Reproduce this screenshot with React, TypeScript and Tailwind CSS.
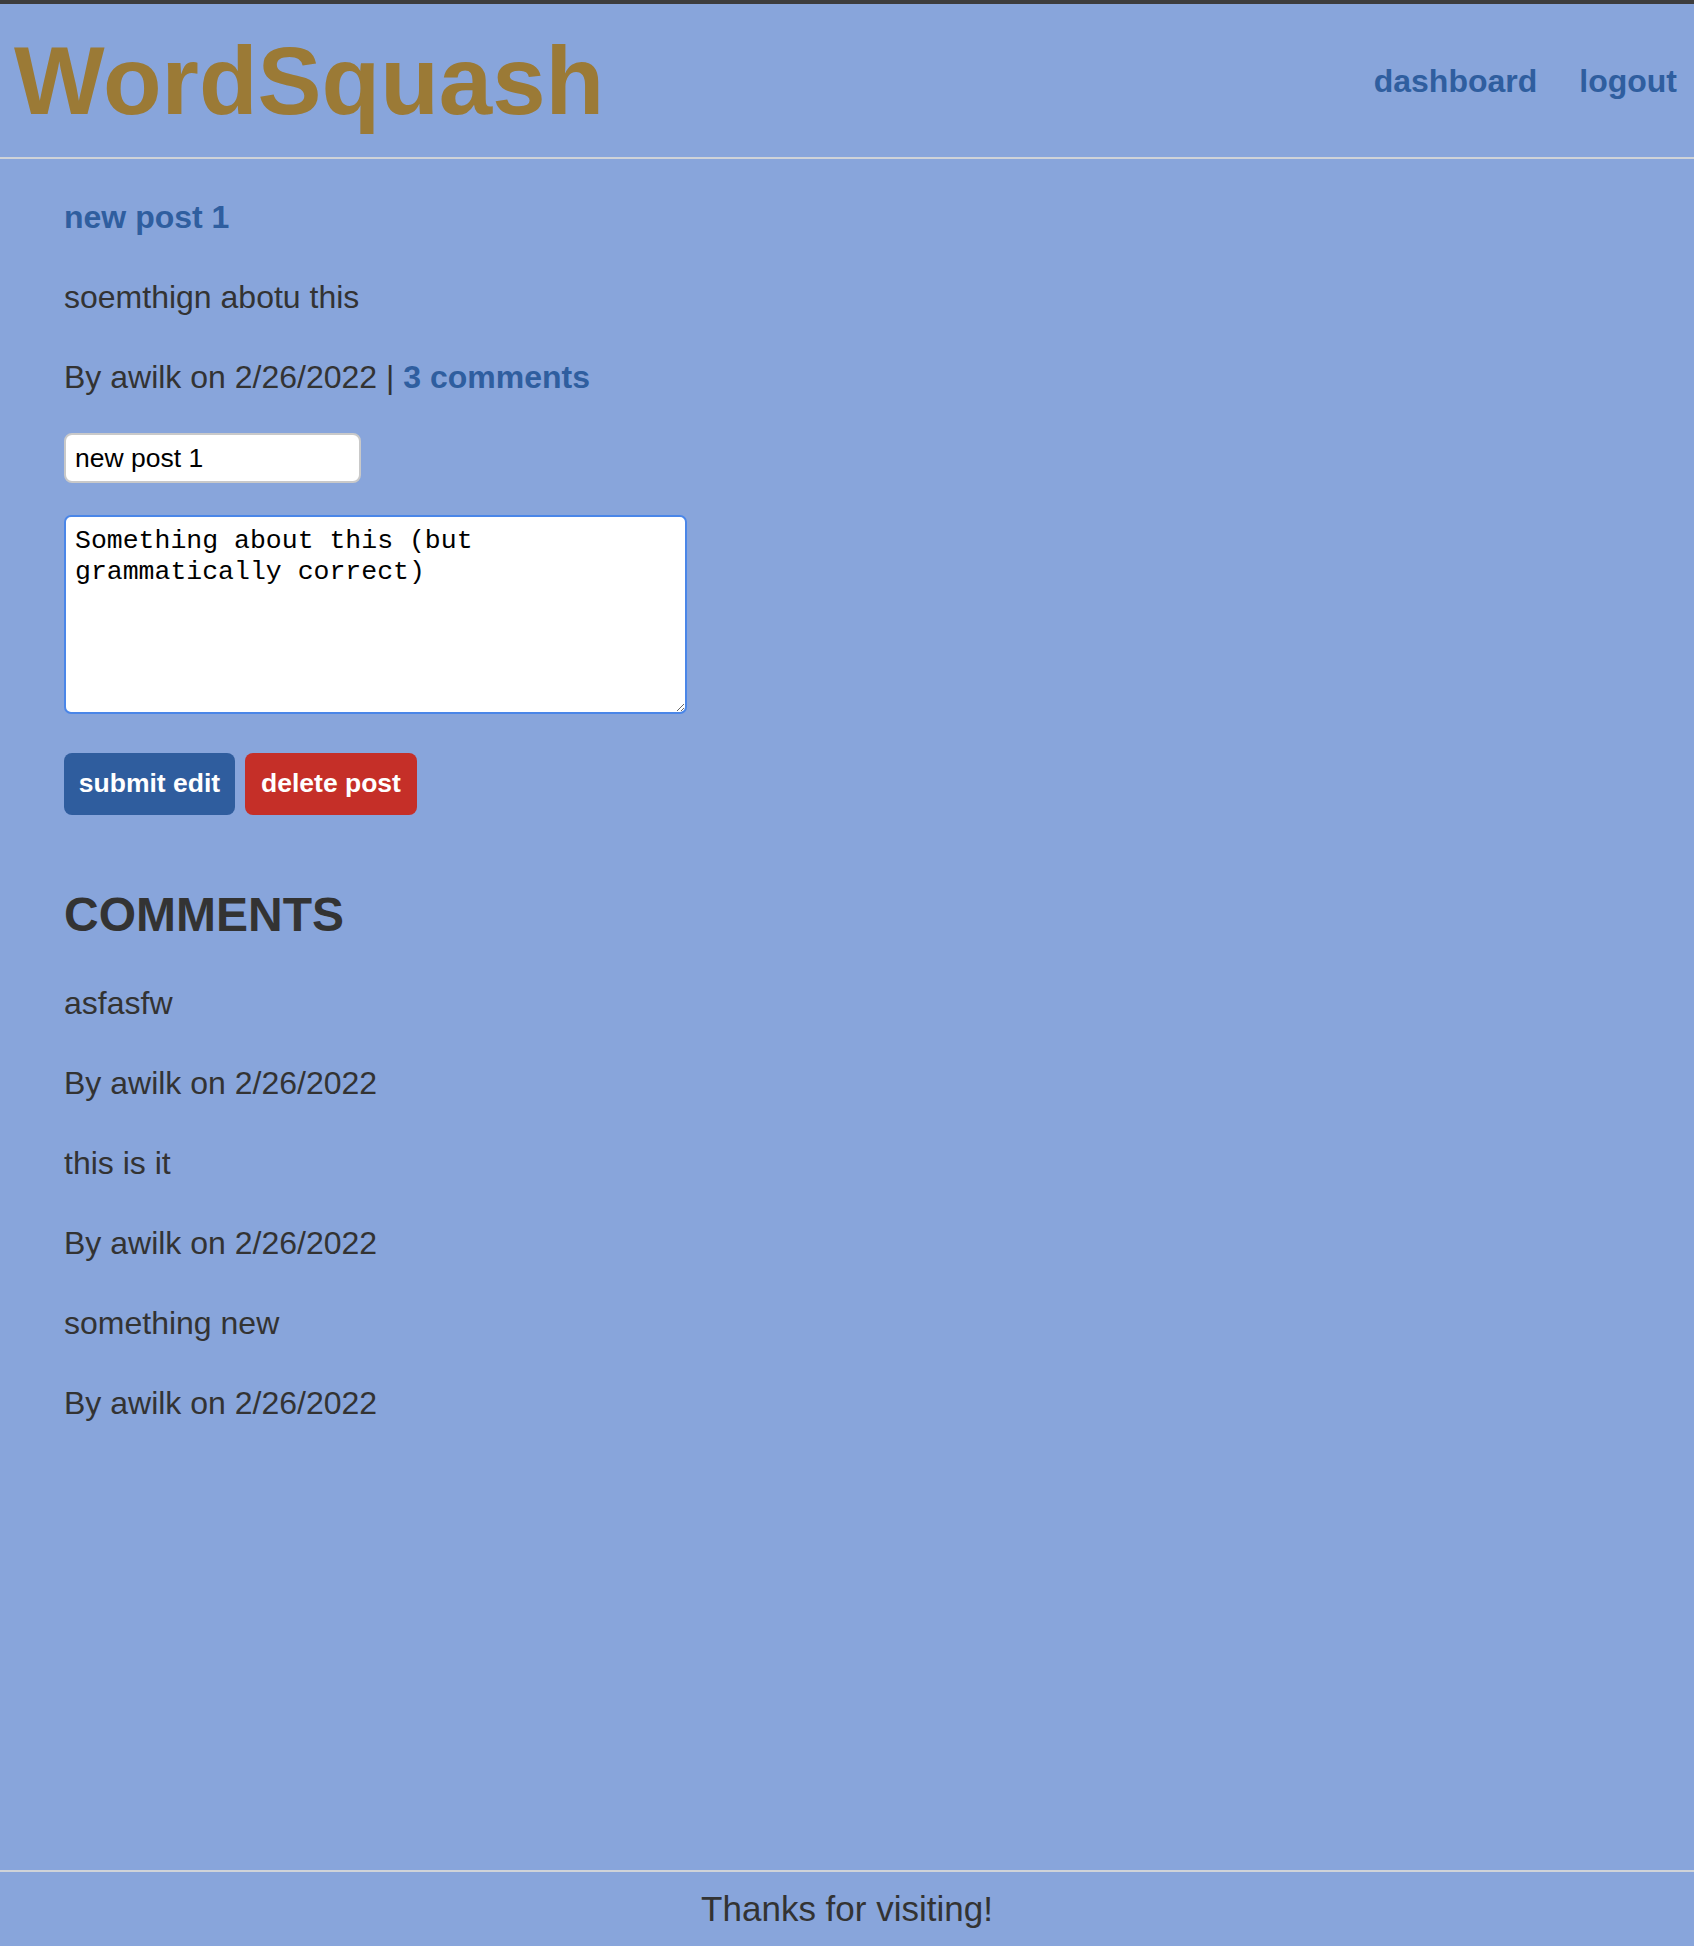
import React, { useState } from 'react';

interface Comment {
  id: number;
  text: string;
  author: string;
  date: string;
}

const comments: Comment[] = [
  { id: 1, text: 'asfasfw', author: 'awilk', date: '2/26/2022' },
  { id: 2, text: 'this is it', author: 'awilk', date: '2/26/2022' },
  { id: 3, text: 'something new', author: 'awilk', date: '2/26/2022' },
];

const sans = "font-['Liberation_Sans','Helvetica','Arial',sans-serif]";

export default function App() {
  const [title, setTitle] = useState('new post 1');
  const [body, setBody] = useState('Something about this (but grammatically correct)');

  return (
    <div className={`min-h-screen flex flex-col bg-[#88a5db] text-[#333333] border-t-4 border-[#3d3d3d] ${sans}`}>
      <header className="h-[155px] flex items-center justify-between pl-[14px] pr-[17px] border-b-2 border-[#cfd3d8]">
        <h1 className="text-[96px] leading-none font-bold text-[#9b7a36]">WordSquash</h1>
        <nav className="flex items-center gap-[42px] text-[32px] font-bold text-[#2f5e9f]">
          <a href="#">dashboard</a>
          <a href="#">logout</a>
        </nav>
      </header>

      <main className="flex-1 px-[64px] pt-[34px]">
        <div className="flex flex-col gap-[32px] text-[32px] leading-[48px]">
          <a href="#" className="font-bold text-[#2f5e9f] w-fit">new post 1</a>
          <p>soemthign abotu this</p>
          <p>
            By awilk on 2/26/2022 | <a href="#" className="font-bold text-[#2f5e9f]">3 comments</a>
          </p>
        </div>

        <form className="flex flex-col items-start mt-[32px]" onSubmit={(e) => e.preventDefault()}>
          <input
            type="text"
            value={title}
            onChange={(e) => setTitle(e.target.value)}
            className="w-[297px] h-[50px] px-[9px] bg-white border-2 border-[#c9c9c9] rounded-[8px] text-[26.5px] text-black outline-none"
          />
          <textarea
            value={body}
            onChange={(e) => setBody(e.target.value)}
            className="mt-[32px] w-[623px] h-[199px] px-[9px] py-[9px] bg-white border-2 border-[#4a86e8] rounded-[7px] text-[26.5px] leading-[31px] text-black outline-none font-['Liberation_Mono','Courier_New',monospace]"
          />
          <div className="flex gap-[10px] mt-[39px]">
            <button
              type="submit"
              className="h-[62px] w-[171px] rounded-[8px] bg-[#2f5d9e] text-white font-bold text-[26.5px]"
            >
              submit edit
            </button>
            <button
              type="button"
              className="h-[62px] w-[172px] rounded-[8px] bg-[#c52f28] text-white font-bold text-[26.5px]"
            >
              delete post
            </button>
          </div>
        </form>

        <h2 className="mt-[72px] text-[48px] leading-[56px] font-bold">COMMENTS</h2>
        <div className="mt-[36px] flex flex-col gap-[32px] text-[32px] leading-[48px]">
          {comments.map((c) => (
            <React.Fragment key={c.id}>
              <p>{c.text}</p>
              <p>
                By {c.author} on {c.date}
              </p>
            </React.Fragment>
          ))}
        </div>
      </main>

      <footer className="h-[76px] flex items-center justify-center border-t-2 border-[#cfd3d8] text-[35px]">
        Thanks for visiting!
      </footer>
    </div>
  );
}
